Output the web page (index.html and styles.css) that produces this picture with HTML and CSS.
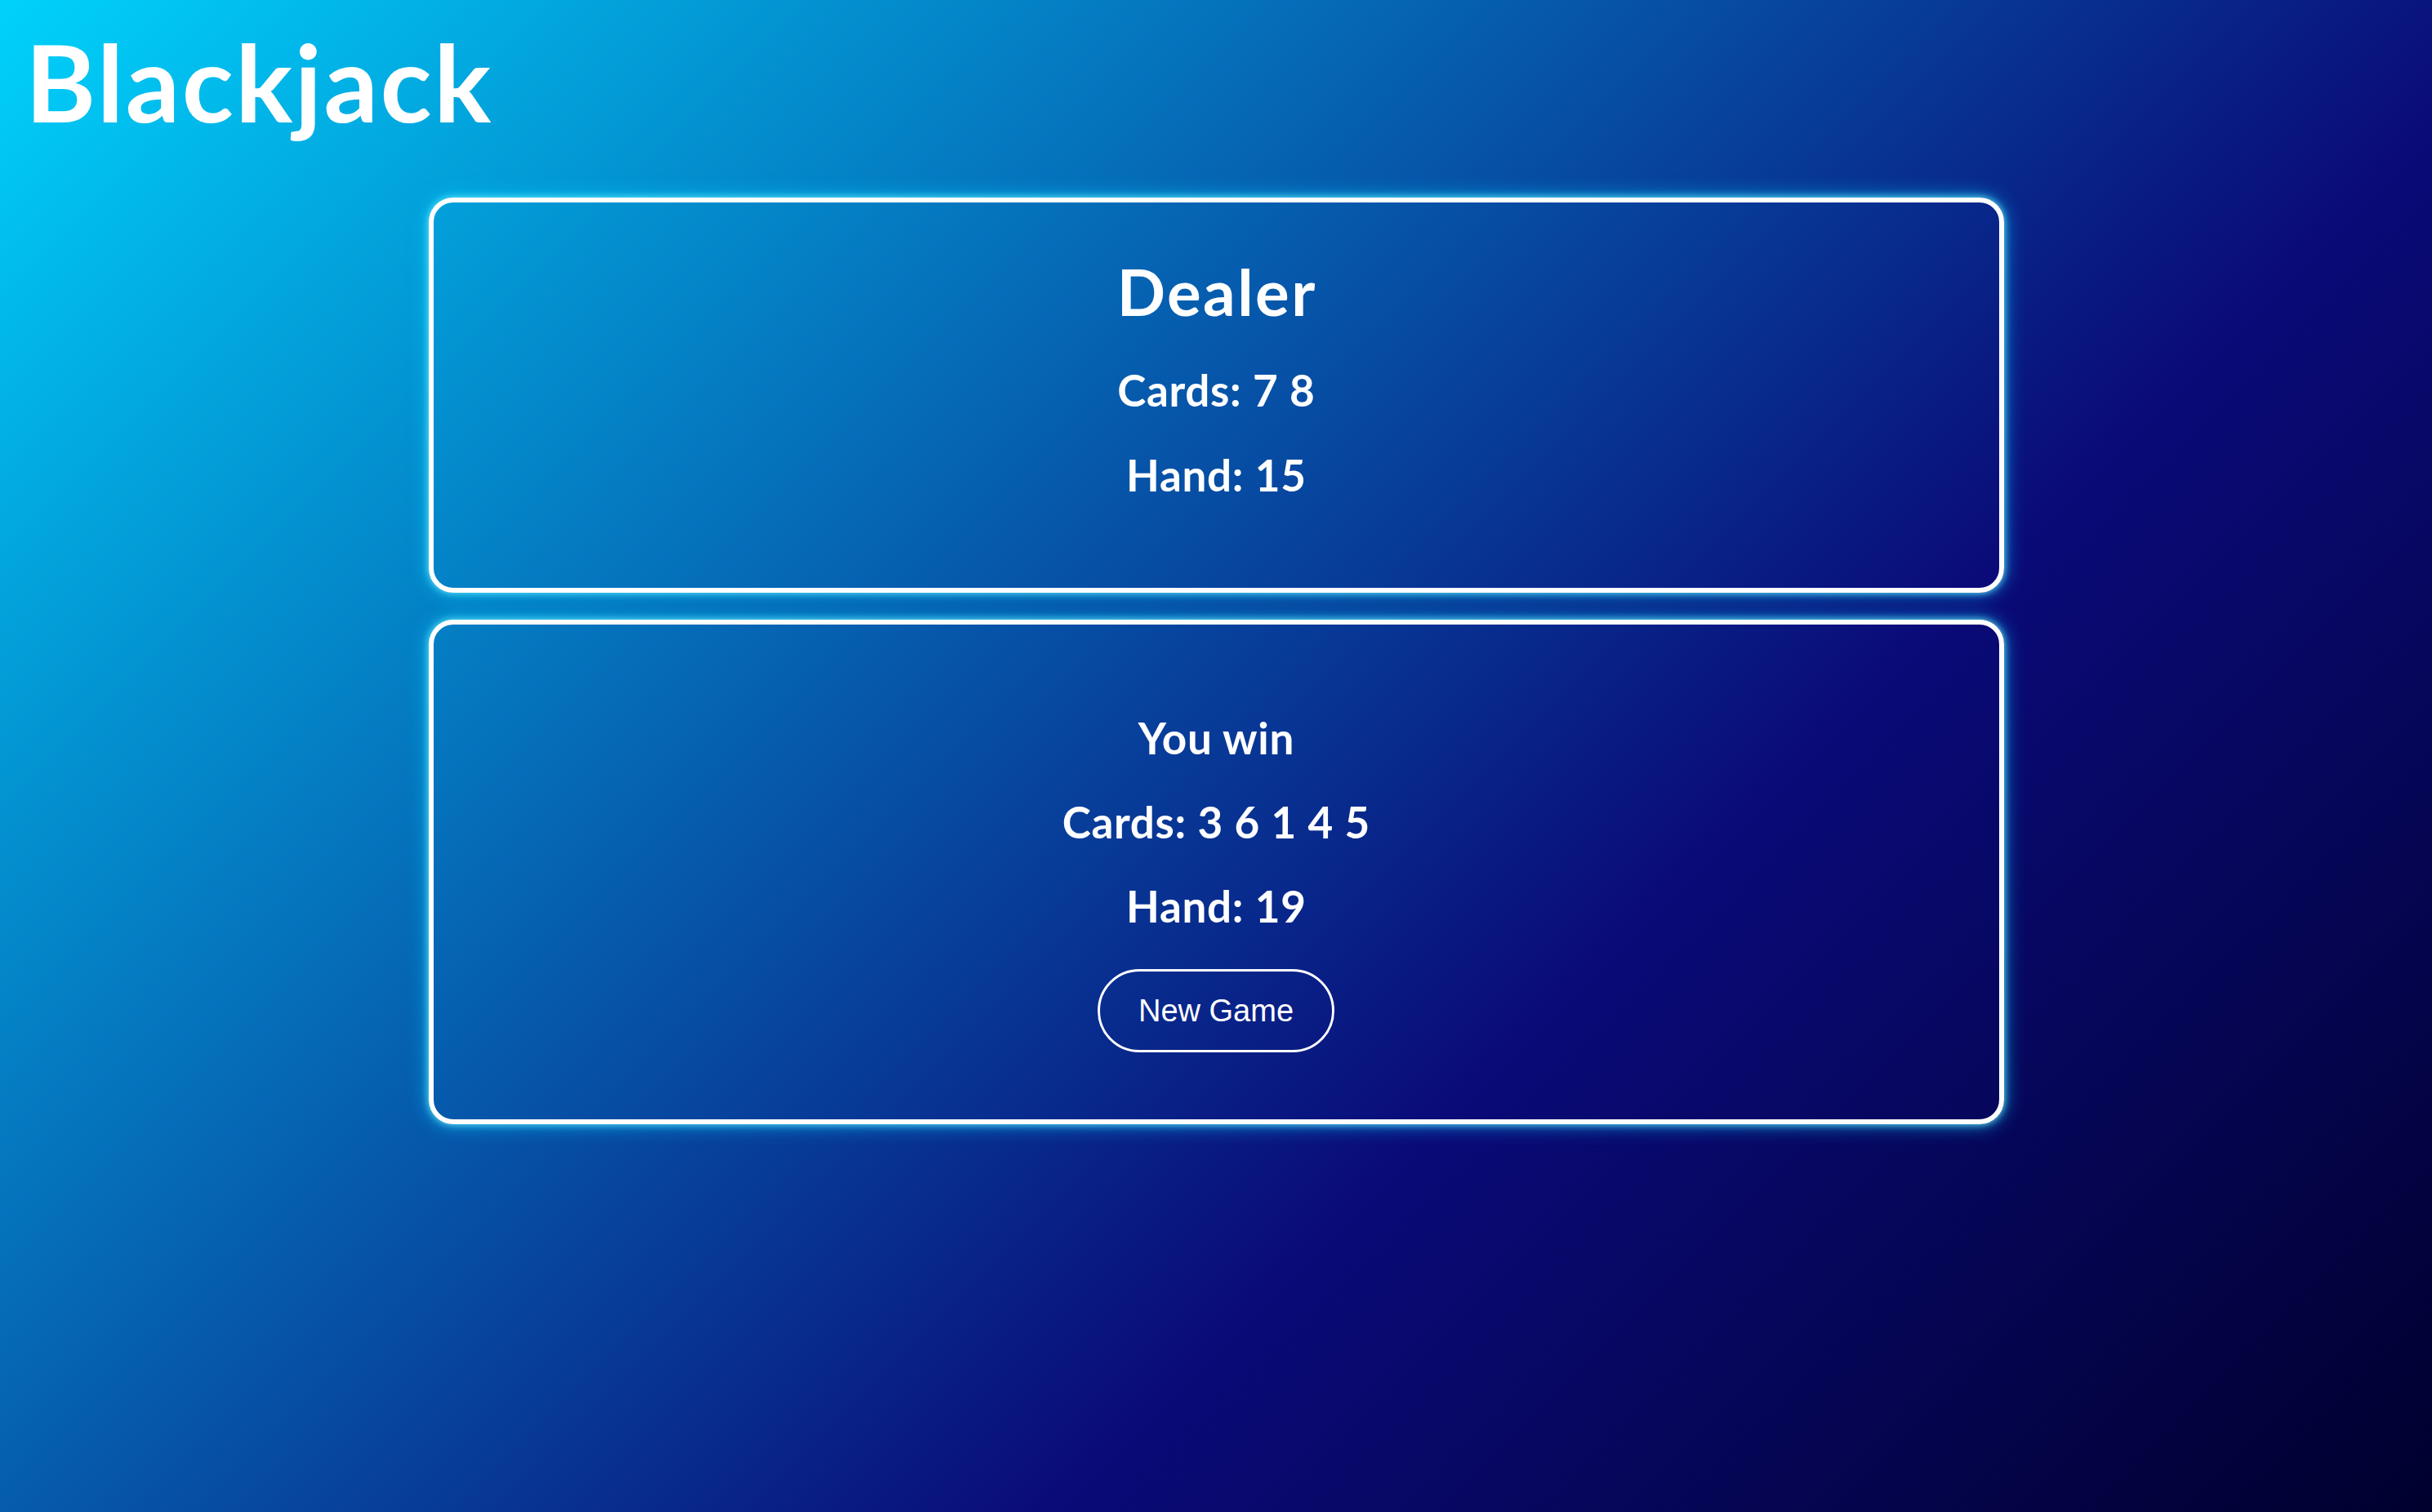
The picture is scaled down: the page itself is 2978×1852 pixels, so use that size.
FILE: index.html
```html
<!DOCTYPE html>
<html lang="en">
<head>
<meta charset="utf-8">
<title>Blackjack</title>
<link rel="stylesheet" href="styles.css">
</head>
<body>
<h1 class="title">Blackjack</h1>
<main class="table">
  <section class="panel panel-dealer">
    <h2 class="panel-name">Dealer</h2>
    <p class="line">Cards: 7 8</p>
    <p class="line">Hand: 15</p>
  </section>
  <section class="panel panel-player">
    <p class="line">You win</p>
    <p class="line">Cards: 3 6 1 4 5</p>
    <p class="line">Hand: 19</p>
    <button class="btn" type="button">New Game</button>
  </section>
</main>
</body>
</html>
```
FILE: styles.css
```css
html {
  height: 100%;
}
body {
  margin: 0;
  min-height: 100%;
  background: linear-gradient(135deg, #00d2fb 0%, #0a0a78 65%, #00002e 100%);
  color: #fff;
  font-family: Lato, "Open Sans", sans-serif;
  font-weight: 700;
}
.title {
  margin: 0;
  padding: 35px 0 0 31px;
  font-size: 131px;
  line-height: 130px;
  font-weight: 700;
  letter-spacing: 2.5px;
}
.table {
  display: flex;
  flex-direction: column;
  align-items: center;
  gap: 33px;
  margin-top: 77px;
}
.panel {
  box-sizing: border-box;
  width: 1929px;
  border: 6px solid #fff;
  border-radius: 30px;
  box-shadow: 0 0 10px rgba(120, 240, 255, 0.9), 0 0 24px rgba(0, 210, 255, 0.7);
  display: flex;
  flex-direction: column;
  align-items: center;
  gap: 52px;
  text-align: center;
}
.panel-dealer {
  padding: 71px 0 112px;
}
.panel-player {
  padding: 113px 0 82px;
  gap: 51px;
}
.panel-name {
  margin: 0 0 4px;
  font-size: 78px;
  line-height: 77px;
  font-weight: 700;
  letter-spacing: 2.5px;
  text-indent: 2.5px;
}
.line {
  margin: 0;
  font-size: 53px;
  line-height: 52px;
  letter-spacing: 0.7px;
  text-indent: 0.7px;
}
.btn {
  box-sizing: border-box;
  height: 102px;
  padding: 0 47px;
  border: 3px solid #fff;
  border-radius: 999px;
  background: transparent;
  color: #fff;
  font-family: "Liberation Sans", Arial, sans-serif;
  font-weight: 400;
  font-size: 38px;
  line-height: 96px;
}
```
